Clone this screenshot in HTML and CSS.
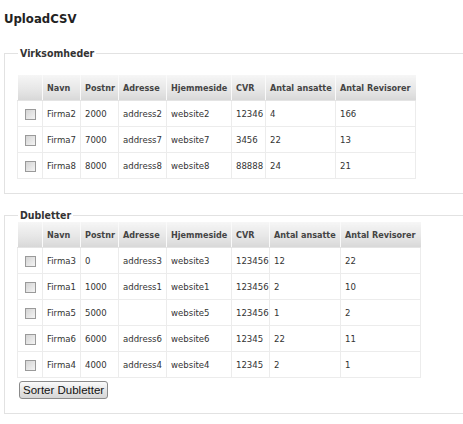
FILE: index.html
```html
<!DOCTYPE html>
<html>
<head>
<meta charset="utf-8">
<title>UploadCSV</title>
<link rel="stylesheet" href="styles.css">
</head>
<body>
<h2 class="title">UploadCSV</h2>

<fieldset class="group group-first">
  <legend>Virksomheder</legend>
  <table class="grid grid-a">
    <colgroup>
      <col class="w-chk"><col class="w-navn"><col class="w-post"><col class="w-adr"><col class="w-web"><col class="w-cvr"><col class="w-ans"><col class="w-rev">
    </colgroup>
    <thead>
      <tr><th></th><th>Navn</th><th>Postnr</th><th>Adresse</th><th>Hjemmeside</th><th>CVR</th><th>Antal ansatte</th><th>Antal Revisorer</th></tr>
    </thead>
    <tbody>
      <tr><td class="chk"><span class="box"></span></td><td>Firma2</td><td>2000</td><td>address2</td><td>website2</td><td>12346</td><td>4</td><td>166</td></tr>
      <tr><td class="chk"><span class="box"></span></td><td>Firma7</td><td>7000</td><td>address7</td><td>website7</td><td>3456</td><td>22</td><td>13</td></tr>
      <tr><td class="chk"><span class="box"></span></td><td>Firma8</td><td>8000</td><td>address8</td><td>website8</td><td>88888</td><td>24</td><td>21</td></tr>
    </tbody>
  </table>
</fieldset>

<fieldset class="group group-second">
  <legend>Dubletter</legend>
  <table class="grid grid-b">
    <colgroup>
      <col class="w-chk"><col class="w-navn"><col class="w-post"><col class="w-adr"><col class="w-web"><col class="w-cvr"><col class="w-ans"><col class="w-rev">
    </colgroup>
    <thead>
      <tr><th></th><th>Navn</th><th>Postnr</th><th>Adresse</th><th>Hjemmeside</th><th>CVR</th><th>Antal ansatte</th><th>Antal Revisorer</th></tr>
    </thead>
    <tbody>
      <tr><td class="chk"><span class="box"></span></td><td>Firma3</td><td>0</td><td>address3</td><td>website3</td><td>123456</td><td>12</td><td>22</td></tr>
      <tr><td class="chk"><span class="box"></span></td><td>Firma1</td><td>1000</td><td>address1</td><td>website1</td><td>123456</td><td>2</td><td>10</td></tr>
      <tr><td class="chk"><span class="box"></span></td><td>Firma5</td><td>5000</td><td></td><td>website5</td><td>123456</td><td>1</td><td>2</td></tr>
      <tr><td class="chk"><span class="box"></span></td><td>Firma6</td><td>6000</td><td>address6</td><td>website6</td><td>12345</td><td>22</td><td>11</td></tr>
      <tr><td class="chk"><span class="box"></span></td><td>Firma4</td><td>4000</td><td>address4</td><td>website4</td><td>12345</td><td>2</td><td>1</td></tr>
    </tbody>
  </table>
  <button class="btn" type="button">Sorter Dubletter</button>
</fieldset>
</body>
</html>
```

FILE: styles.css
```css
body {
  margin: 0;
  padding: 4px 0 4px 4px;
  background: #fff;
  color: #333;
  font-family: "DejaVu Sans Condensed", "DejaVu Sans", sans-serif;
  font-size: 9.5px;
}
.title {
  margin: 6px 0 0 0;
  font-size: 13px;
  line-height: 18px;
  font-weight: bold;
  color: #222;
}
.group {
  margin: 0;
  min-width: 0;
  border: 1px solid #e2e2e2;
  border-right: none;
  padding: 0 0 0 12px;
}
.group-first {
  margin-top: 19px;
  padding-top: 16px;
  padding-bottom: 14px;
}
.group-second {
  margin-top: 15px;
  padding-top: 1px;
  padding-bottom: 14px;
}
.group legend {
  padding: 0 2px;
  margin-left: 1px;
  font-weight: bold;
  font-size: 10.5px;
  color: #333;
}
.grid {
  border-collapse: collapse;
  table-layout: fixed;
}
.grid-a { width: 398px; }
.grid-b { width: 403px; }
.w-chk { width: 25px; }
.w-navn { width: 38px; }
.w-post { width: 38px; }
.w-adr { width: 48px; }
.w-web { width: 65px; }
.grid-a .w-cvr { width: 34px; }
.grid-a .w-ans { width: 70px; }
.grid-a .w-rev { width: 80px; }
.grid-b .w-cvr { width: 38px; }
.grid-b .w-ans { width: 71px; }
.grid-b .w-rev { width: 80px; }
.grid th {
  height: 25px;
  padding: 0 4px;
  text-align: left;
  font-weight: bold;
  font-size: 9px;
  color: #444;
  white-space: nowrap;
  background: linear-gradient(#f6f6f6, #e6e6e6 60%, #d8d8d8);
  border-left: 1px solid #fafafa;
  border-bottom: 1px solid #e4e4e4;
  overflow: hidden;
}
.grid th:first-child { border-left: none; }
.grid td {
  height: 25px;
  padding: 0 4px;
  border: 1px solid #ececec;
  white-space: nowrap;
  overflow: hidden;
  color: #333;
}
.grid td.chk {
  text-align: center;
  padding: 0;
}
.box {
  display: inline-block;
  width: 9px;
  height: 9px;
  border: 1px solid #9a9a9a;
  background: linear-gradient(135deg, #d4d4d4, #f4f4f4);
  vertical-align: middle;
}
.btn {
  display: block;
  margin: 3px 0 0 2px;
  height: 18px;
  padding: 0 3px;
  font-family: "Liberation Sans", Arial, sans-serif;
  font-size: 11.5px;
  line-height: 14px;
  color: #111;
  background: linear-gradient(#fbfbfb, #e4e4e4 55%, #d6d6d6);
  border: 1px solid #8a8a8a;
  border-radius: 3px;
}
```
